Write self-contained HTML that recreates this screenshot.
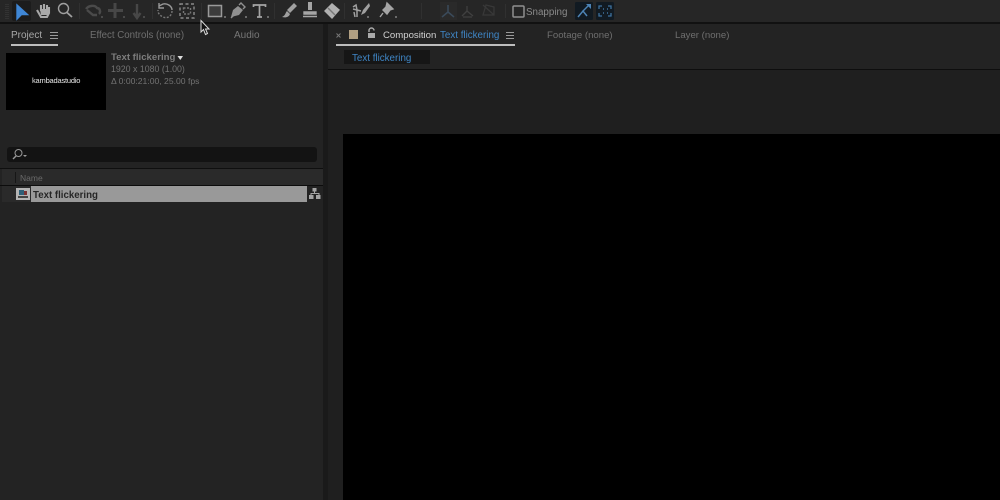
<!DOCTYPE html>
<html><head><meta charset="utf-8"><style>
html,body{margin:0;padding:0;width:1000px;height:500px;overflow:hidden;background:#1a1a1a}
body{position:relative;font-family:"Liberation Sans",sans-serif;font-size:9.800px;color:#8a8a8a}
.a{position:absolute}
.t{position:absolute;white-space:nowrap;line-height:12px;filter:blur(.25px)}
svg{position:absolute;left:0;top:0;filter:blur(.35px)}
</style></head><body>
<div class="a" style="left:0;top:0;width:1000px;height:22px;background:#262626"></div>
<div class="a" style="left:0;top:22px;width:1000px;height:2px;background:#111"></div>
<div class="a" style="left:0;top:24px;width:323px;height:476px;background:#232323"></div>
<div class="a" style="left:323px;top:24px;width:5px;height:476px;background:#1a1a1a"></div>
<div class="a" style="left:328px;top:24px;width:672px;height:476px;background:#1f1f1f"></div>
<div class="a" style="left:328px;top:24px;width:672px;height:45px;background:#232323"></div>
<div class="a" style="left:328px;top:69px;width:672px;height:1px;background:#0e0e0e"></div>
<div class="a" style="left:343px;top:134px;width:657px;height:366px;background:#000"></div>
<div class="a" style="left:12px;top:1px;width:19px;height:20px;background:#1c1c1c;border-radius:2px"></div>

<div class="t" style="left:526px;top:7px;font-size:9.800px;color:#8a8a8a">Snapping</div>

<!-- tabs left -->
<div class="t" style="left:11px;top:30px;font-size:10px;color:#a8a8a8">Project</div>
<div class="a" style="left:11px;top:44px;width:47px;height:2px;background:#bdbdbd"></div>
<div class="t" style="left:90px;top:30px;font-size:9.700px;color:#6f6f6f">Effect Controls (none)</div>
<div class="t" style="left:234px;top:30px;font-size:10px;color:#777">Audio</div>

<!-- project info -->
<div class="a" style="left:6px;top:53px;width:100px;height:57px;background:#000"></div>
<div class="t" style="left:32px;top:75px;font-size:7.500px;color:#e8e8e8;letter-spacing:-.2px">kambadastudio</div>
<div class="t" style="left:111px;top:52px;font-size:9.600px;font-weight:bold;color:#7d7d7d">Text flickering</div>
<div class="t" style="left:111px;top:63px;font-size:8.800px;color:#727272">1920 x 1080 (1.00)</div>
<div class="t" style="left:111px;top:75px;font-size:8.600px;color:#727272">Δ 0:00:21:00, 25.00 fps</div>

<!-- search -->
<div class="a" style="left:7px;top:147px;width:310px;height:15px;background:#131313;border-radius:3px"></div>
<div class="a" style="left:0;top:168px;width:323px;height:1px;background:#0f0f0f"></div>
<div class="a" style="left:2px;top:169px;width:321px;height:16px;background:#2a2a2a"></div>
<div class="a" style="left:15px;top:172px;width:1px;height:11px;background:#161616"></div>
<div class="t" style="left:20px;top:172px;font-size:8.500px;color:#6a6a6a">Name</div>
<div class="a" style="left:0;top:185px;width:323px;height:1px;background:#0c0c0c"></div>
<div class="a" style="left:2px;top:186px;width:305px;height:16px;background:#2a2a2a"></div>
<div class="a" style="left:31px;top:186px;width:276px;height:16px;background:#999"></div>
<div class="a" style="left:16px;top:188px;width:14px;height:12px;background:#b4b4b4"></div>
<div class="a" style="left:19px;top:190px;width:5px;height:5px;background:#2e5f77"></div>
<div class="a" style="left:24px;top:191px;width:3px;height:4px;background:#7a3333"></div>
<div class="a" style="left:18px;top:196px;width:10px;height:2px;background:#444"></div>
<div class="t" style="left:33px;top:190px;font-size:9.700px;font-weight:bold;color:#262626">Text flickering</div>

<!-- tabs right -->
<div class="a" style="left:349px;top:30px;width:9px;height:9px;background:#b19f82"></div>
<div class="t" style="left:383px;top:30px;font-size:9.600px;color:#d2d2d2">Composition</div>
<div class="t" style="left:440px;top:30px;color:#3f86c6">Text flickering</div>
<div class="a" style="left:336px;top:44px;width:179px;height:2px;background:#bdbdbd"></div>
<div class="t" style="left:547px;top:30px;font-size:9.600px;color:#6f6f6f">Footage (none)</div>
<div class="t" style="left:675px;top:30px;font-size:9.600px;color:#6f6f6f">Layer (none)</div>
<div class="a" style="left:344px;top:50px;width:86px;height:14px;background:#161616"></div>
<div class="t" style="left:352px;top:52.600px;color:#3f86c6">Text flickering</div>

<svg width="1000" height="500" fill="none" stroke="#8c8c8c" stroke-width="1.4">
<!-- grip -->
<path d="M6 4v16M8 4v16" stroke="#383838" stroke-dasharray="1 1"/>
<!-- select -->
<path d="M17 5v14l4.500-4.500h6z" fill="#3f87d6" stroke="#3f87d6"/>
<!-- hand -->
<path d="M37 10l4 7h6l2-4v-6M41 11V5M44 11V4M47 11V5" stroke="#a8a8a8" stroke-width="2.100"/><path d="M40 9h8v6h-7z" fill="#a8a8a8" stroke="none"/>
<!-- zoom -->
<circle cx="63.500" cy="8.500" r="5" stroke="#a0a0a0"/><path d="M67 12.500l5 4.500" stroke="#a0a0a0" stroke-width="1.800"/>
<!-- dim icons -->
<path d="M86 9c3-4 9-4 11-1 3 0 4 4 2 6M87 10l6 5h4" stroke="#4a4a4a" stroke-width="2.400"/>
<path d="M115 3v15M108 10.500h15" stroke="#474747" stroke-width="3"/>
<path d="M137 4v12M133.500 13l3.500 5 3.500-5" stroke="#474747" stroke-width="2.400"/>
<path d="M123 17h2M101 17h2M143 17h2" stroke="#555"/>
<path d="M159 6l4-2c4-1 9 2 9 6" stroke="#999"/><path d="M159 3v5h5" stroke="#999"/><path d="M172 11c0 5-5 8-9 6s-5-4-5-7" stroke="#777" stroke-dasharray="2 1.500"/>
<!-- camera orbit -->
<path d="M180 4h14v14h-14z" stroke="#8a8a8a" stroke-dasharray="3 2.500"/><path d="M183.500 8h7v6h-7z" stroke="#777" stroke-dasharray="2 1.500"/>
<!-- rect -->
<rect x="208.500" y="5.500" width="13" height="11" fill="#3c3c3c" stroke="#9a9a9a" stroke-width="1.500"/>
<path d="M224 17h2" stroke="#888"/>
<!-- pen -->
<path d="M231 17l2-7 5-4 5 4-4 5z" fill="#909090" stroke="none"/><path d="M239 5l2-2 4 4-2 2M231 18l5-5" stroke="#909090"/>
<path d="M245 17h2" stroke="#888"/>
<!-- T -->
<path d="M253.500 7V5h12v2M259.500 5v11.500M257 17h5" stroke="#a5a5a5" stroke-width="1.700"/>
<path d="M267 17h2" stroke="#888"/>
<!-- brush -->
<path d="M294 4l-6 6 2 2 6-6z" fill="#a0a0a0" stroke="#a0a0a0"/><path d="M287 11c-2 2-1 4-5 6 4 1 7 0 8-3z" fill="#a0a0a0" stroke="none"/>
<!-- stamp -->
<path d="M309 3h2v6h-2z" fill="#a5a5a5" stroke="#a5a5a5" stroke-width="2"/><path d="M304 12h12v2h-12zM303 16.500h14" fill="#a5a5a5" stroke="#a5a5a5"/>
<!-- eraser -->
<path d="M325 11l7-7 7 6-7 8z" fill="#b0b0b0" stroke="#b0b0b0"/><path d="M328 8l7 7" stroke="#777"/>
<!-- roto -->
<path d="M353 7l3-2 1 5v7M353 9l8 2M355 17l-1-5" stroke="#a0a0a0" stroke-width="1.500"/><path d="M369 3l-6 7-2 5 4-2 5-7z" fill="#a0a0a0" stroke="none"/><path d="M367 17h2" stroke="#888"/>
<!-- pin -->
<path d="M387 3l6 6-3 1-3 4-4-4 3-3zM383 13l-3 4" fill="#a5a5a5" stroke="#a5a5a5"/><path d="M395 17h2" stroke="#888"/>
<!-- separators -->
<path d="M79.500 3v16M152.500 3v16M201.500 3v16M274.500 3v16M344.500 3v16M421.500 3v16M505.500 4v14" stroke="#303030" stroke-width="1"/>
<!-- axis -->
<rect x="440" y="2" width="17" height="18" fill="#2a2a2a" stroke="none"/>
<path d="M448 12V5M448 12l-6 5M448 12l6 5" stroke="#3a4a5a" stroke-width="1.500"/>
<path d="M467 6v5M467 11l-5 5M467 11l6 5M463 17h9" stroke="#404040" stroke-width="1.300"/><path d="M483 5l11 10M483 15l3-10 8 2v8z" stroke="#383838" stroke-width="1.300"/>
<!-- snapping checkbox -->
<rect x="513" y="6" width="11" height="11" rx="1" stroke="#8f8f8f" stroke-width="1.500"/>
<!-- snap buttons -->
<rect x="575" y="2" width="18" height="18" rx="1.500" fill="#111a22" stroke="none"/>
<rect x="596" y="2" width="18" height="18" rx="1.500" fill="#111a22" stroke="none"/>
<path d="M578 17l5-6 4 5" stroke="#4d83b5" stroke-width="1.500"/><path d="M583 11l6-6" stroke="#4d83b5"/><path d="M586 4h5v5z" fill="#4d83b5" stroke="none"/>
<path d="M599 9V6h3M608 6h3v3M611 13v3h-3M602 16h-3v-3" stroke="#3f729f" stroke-width="1.300"/><path d="M603 9h1M607 9h1M603 13h1M607 13h1" stroke="#3f729f"/>
<!-- panel menu -->
<path d="M50 32.500h8M50 35.500h8M50 38.500h8M506 32.500h8M506 35.500h8M506 38.500h8" stroke="#9a9a9a" stroke-width="1"/>
<path d="M336.500 33.500l4 4M340.500 33.500l-4 4" stroke="#777" stroke-width="1"/>
<!-- lock -->
<path d="M369 32v-1.500a2.500 2.500 0 0 1 5 0" stroke="#aaa"/><rect x="368" y="33" width="7" height="5" fill="#aaa" stroke="none"/>
<!-- search -->
<circle cx="18.500" cy="153" r="3.500" stroke="#999" stroke-width="1"/><path d="M16 156l-3 3" stroke="#999"/><path d="M23 155h4l-2 2z" fill="#999" stroke="none"/>
<!-- flowchart -->
<rect x="312.500" y="188" width="4" height="3.500" fill="#a5a5a5" stroke="none"/><rect x="309" y="195" width="4.500" height="4" fill="#a5a5a5" stroke="none"/><rect x="316" y="195" width="4.500" height="4" fill="#a5a5a5" stroke="none"/><path d="M314.500 191v2.500M311 195v-1.500h8v1.500" stroke="#a5a5a5" stroke-width="1"/>
<!-- cursor -->
<path d="M201 20.500v11.500l2.500-2.500 2 5 2-1-2-4.500h3.500z" fill="#111" stroke="#ddd" stroke-width="1"/>
<!-- triangle -->
<path d="M177.500 56h5.500l-2.700 4z" fill="#ddd" stroke="none"/>
</svg>
</body></html>
